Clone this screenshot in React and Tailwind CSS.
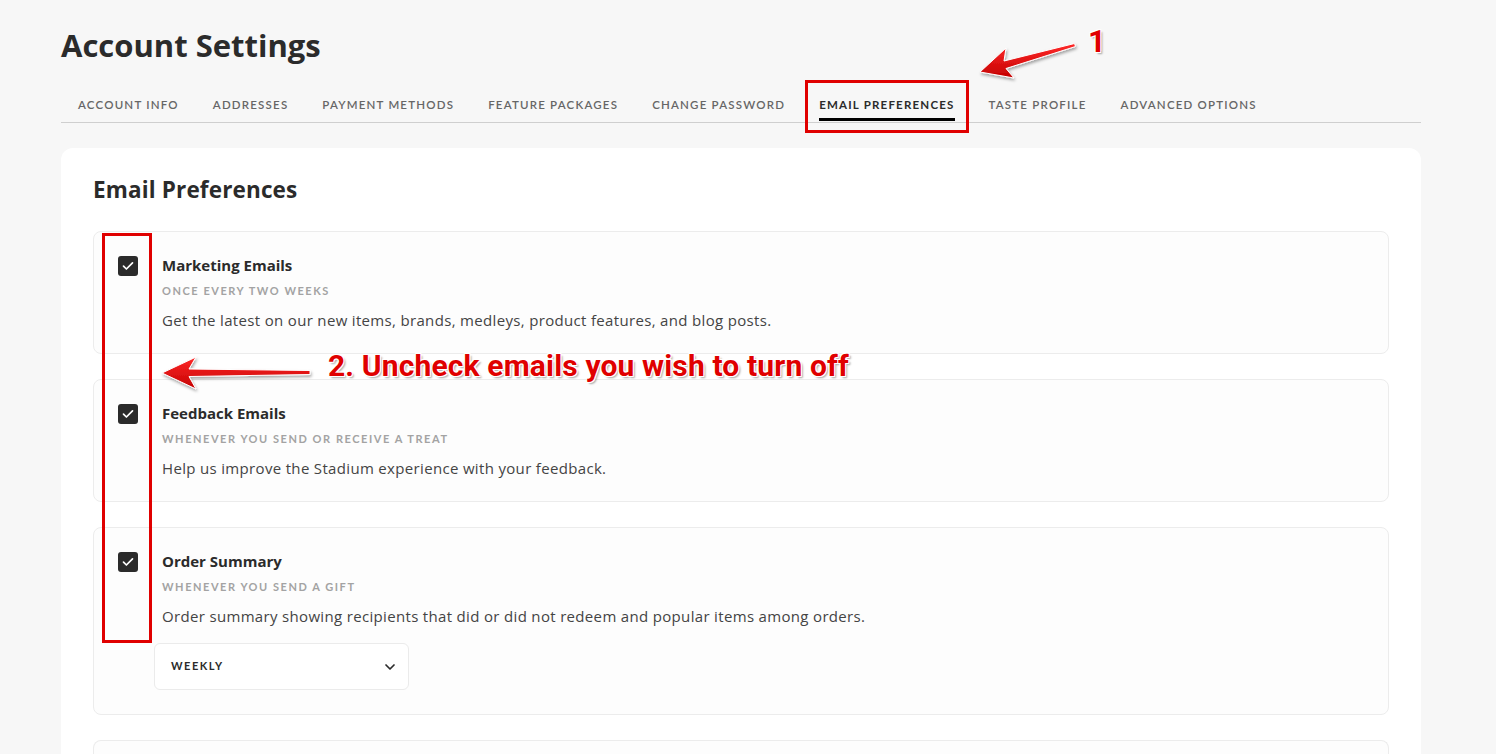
import React, { useState } from 'react';
import { ChevronDown } from 'lucide-react';

const tabs = [
  'Account Info',
  'Addresses',
  'Payment Methods',
  'Feature Packages',
  'Change Password',
  'Email Preferences',
  'Taste Profile',
  'Advanced Options',
];

const prefs = [
  {
    title: 'Marketing Emails',
    when: 'Once every two weeks',
    text: 'Get the latest on our new items, brands, medleys, product features, and blog posts.',
  },
  {
    title: 'Feedback Emails',
    when: 'Whenever you send or receive a treat',
    text: 'Help us improve the Stadium experience with your feedback.',
  },
  {
    title: 'Order Summary',
    when: 'Whenever you send a gift',
    text: 'Order summary showing recipients that did or did not redeem and popular items among orders.',
    select: true,
  },
];

const Check = ({ checked, onClick }) => (
  <button
    onClick={onClick}
    className={`w-5 h-5 shrink-0 rounded-[3px] flex items-center justify-center ${
      checked ? 'bg-[#2b2b2b]' : 'bg-white border border-[#bbb]'
    }`}
  >
    {checked && (
      <svg width="12" height="10" viewBox="0 0 12 10" fill="none">
        <path d="M1.5 5.2 4.4 8 10.5 1.8" stroke="white" strokeWidth="1.7" strokeLinecap="round" strokeLinejoin="round" />
      </svg>
    )}
  </button>
);

const PrefItem = ({ item }) => {
  const [checked, setChecked] = useState(true);
  return (
    <div className="bg-[#fdfdfd] border border-[#ececec] rounded-lg pl-6 pr-6 pt-6 pb-[22px] flex gap-6">
      <Check checked={checked} onClick={() => setChecked(!checked)} />
      <div className="flex-1 -mt-px">
        <div className="text-[15px] leading-5 font-bold text-[#2b2b2b] font-['Open_Sans',sans-serif] tracking-[0px]">{item.title}</div>
        <div className="mt-2 text-[11px] leading-4 font-bold uppercase tracking-[1.55px] text-[#a3a3a3]">{item.when}</div>
        <div className="mt-[10px] text-[15px] leading-[22px] text-[#444] font-['Open_Sans',sans-serif] tracking-[0.33px]">{item.text}</div>
        {item.select && (
          <div className="-ml-2 mt-4 mb-[2px] w-[255px] h-[47px] border border-[#ebebeb] rounded-md bg-white flex items-center justify-between pl-4 pr-[10px]">
            <span className="text-[11px] font-bold uppercase tracking-[1.5px] text-[#2b2b2b]">Weekly</span>
            <ChevronDown size={16} strokeWidth={2.6} className="text-[#2b2b2b]" />
          </div>
        )}
      </div>
    </div>
  );
};

const Annotations = () => (
  <>
    <svg className="absolute top-0 left-0 pointer-events-none" width="1496" height="754" viewBox="0 0 1496 754">
      <defs>
        <linearGradient id="ar" x1="0" y1="0" x2="0" y2="1">
          <stop offset="0" stopColor="#ff2a2a" />
          <stop offset="1" stopColor="#c40000" />
        </linearGradient>
        <filter id="sh" x="-20%" y="-40%" width="140%" height="180%">
          <feDropShadow dx="1" dy="2" stdDeviation="1.5" floodColor="#000" floodOpacity="0.35" />
        </filter>
      </defs>
      <rect x="806.5" y="81.5" width="161" height="50" fill="none" stroke="#e00000" strokeWidth="3" />
      <rect x="103.5" y="234.5" width="47" height="407" fill="none" stroke="#e00000" strokeWidth="3" />
      <polygon
        filter="url(#sh)"
        fill="url(#ar)"
        stroke="white"
        strokeWidth="1"
        points="980,72 1014,78 1006,68.5 1075.5,46.5 1074.5,43.5 1004,61 1006,48"
      />
      <polygon
        filter="url(#sh)"
        fill="url(#ar)"
        stroke="white"
        strokeWidth="1"
        points="162,373 196,389 189,376.5 310,374.5 310,370.5 189,369 196,357"
      />
    </svg>
    <div className="absolute left-[1088px] top-[19px] text-[31px] font-bold text-[#e00000] font-['Roboto',sans-serif] [text-shadow:0_0_1px_#fff,1px_1px_0_#fff,-1px_-1px_0_#fff,1px_-1px_0_#fff,-1px_1px_0_#fff,2px_2px_2px_rgba(0,0,0,0.35)]">
      1
    </div>
    <div className="absolute left-[328px] top-[343px] text-[30px] font-bold tracking-[0.15px] text-[#e00000] whitespace-nowrap font-['Roboto',sans-serif] [text-shadow:0_0_1px_#fff,1px_1px_0_#fff,-1px_-1px_0_#fff,1px_-1px_0_#fff,-1px_1px_0_#fff,2px_2px_2px_rgba(0,0,0,0.35)]">
      2. Uncheck emails you wish to turn off
    </div>
  </>
);

export default function App() {
  const active = 'Email Preferences';
  return (
    <div className="relative min-h-screen bg-[#f7f7f7] font-['Lato','Noto_Sans',sans-serif]">
      <div className="ml-[61px] w-[1360px] pt-[25px]">
        <h1 className="text-[31px] leading-10 font-bold text-[#2b2b2b] font-['Open_Sans',sans-serif] tracking-[0px]">Account Settings</h1>

        <div className="mt-[23px] flex border-b border-[#cfcfcf]">
          {tabs.map((t) => (
            <div key={t} className="px-[17px] pt-[9px] pb-px">
              <span
                className={`block pb-[5px] border-b-[3px] text-[11.5px] leading-4 uppercase tracking-[1.2px] ${
                  t === active ? 'border-black text-[#2b2b2b] font-bold' : 'border-transparent text-[#666] font-semibold'
                }`}
              >
                {t}
              </span>
            </div>
          ))}
        </div>

        <div className="mt-[25px] bg-white rounded-t-xl px-8 pt-7 h-[620px]">
          <h2 className="text-[22.5px] leading-7 font-bold text-[#2b2b2b] font-['Open_Sans',sans-serif] tracking-[0.15px]">Email Preferences</h2>
          <div className="mt-[27px] flex flex-col gap-[25px]">
            {prefs.map((p) => (
              <PrefItem key={p.title} item={p} />
            ))}
            <div className="h-10 bg-[#fdfdfd] border border-[#ececec] border-b-0 rounded-t-lg" />
          </div>
        </div>
      </div>
      <Annotations />
    </div>
  );
}
